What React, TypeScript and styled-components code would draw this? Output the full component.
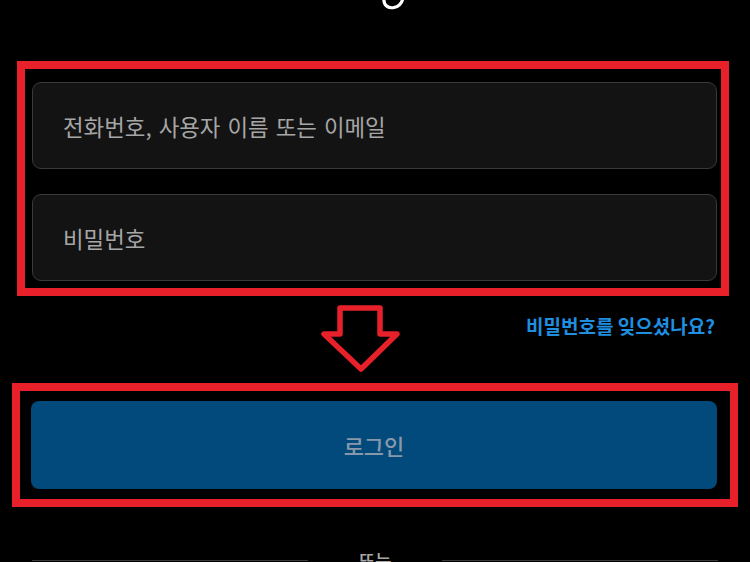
import React from "react";
import styled, { createGlobalStyle } from "styled-components";

const Global = createGlobalStyle`
  html, body {
    margin: 0;
    padding: 0;
    background: #000;
  }
  body {
    font-family: "Noto Sans CJK KR", "Noto Sans", sans-serif;
    color: #fff;
  }
  * { box-sizing: border-box; }
`;

const Page = styled.div`
  width: 750px;
  height: 562px;
  overflow: hidden;
  background: #000;
  display: flex;
  flex-direction: column;
  & > * {
    flex-shrink: 0;
  }
`;

const LogoStrip = styled.div`
  height: 61px;
  display: flex;
  justify-content: center;
  align-items: flex-start;
`;

const Highlight = styled.div<{ $ml: number; $w: number; $pad: string }>`
  margin-left: ${(p) => p.$ml}px;
  width: ${(p) => p.$w}px;
  border: 8px solid #e8202a;
  padding: ${(p) => p.$pad};
  display: flex;
  flex-direction: column;
  gap: 25px;
`;

const Field = styled.div`
  height: 87px;
  width: 685px;
  background: #131313;
  border: 1px solid #3a3a3a;
  border-radius: 9px;
  display: flex;
  align-items: center;
  padding-left: 30px;
  font-size: 22.4px;
  word-spacing: 2px;
  color: #a6a6a6;
`;

const MidRow = styled.div`
  height: 87px;
  display: flex;
  align-items: flex-start;
`;

const ArrowMark = styled.svg`
  margin-left: 320px;
  margin-top: 9px;
  flex: none;
`;

const ForgotLink = styled.a`
  margin-left: auto;
  margin-right: 35px;
  margin-top: 19px;
  font-size: 19px;
  line-height: 22px;
  font-weight: 700;
  color: #1f8fe0;
  text-decoration: none;
`;

const LoginButton = styled.button`
  width: 686px;
  height: 88px;
  border: none;
  border-radius: 8px;
  background: #024a7b;
  color: #8798ab;
  font-family: "Noto Sans CJK KR", "Noto Sans", sans-serif;
  font-size: 22px;
  font-weight: 500;
  cursor: pointer;
`;

const Divider = styled.div`
  margin-top: 42px;
  margin-left: 32px;
  width: 686px;
  display: flex;
  align-items: center;
  gap: 50px;
`;

const Line = styled.div`
  flex: 1;
  height: 1px;
  background: #3a3a3a;
`;

const OrText = styled.span`
  font-size: 18px;
  line-height: 22px;
  color: #a8a8a8;
  font-weight: 500;
`;

export default function App() {
  return (
    <>
      <Global />
      <Page>
        <LogoStrip>
          <svg width="30" height="12" viewBox="0 0 30 12" style={{ marginLeft: 38 }}>
            <path
              d="M5 -2 C4 6, 10 8.5, 15 7.5 C20 6.5, 23 3, 24 -2"
              fill="none"
              stroke="#fff"
              strokeWidth="3.2"
              strokeLinecap="round"
            />
          </svg>
        </LogoStrip>
        <Highlight $ml={17} $w={712} $pad="13px 5px 7px 7px">
          <Field>전화번호, 사용자 이름 또는 이메일</Field>
          <Field>비밀번호</Field>
        </Highlight>
        <MidRow>
          <ArrowMark width="82" height="68" viewBox="0 0 82 68">
            <path
              d="M20 3 H60 V29 H77 L41 64 L4 29 H20 Z"
              fill="none"
              stroke="#e8202a"
              strokeWidth="5.5"
              strokeLinejoin="round"
            />
          </ArrowMark>
          <ForgotLink href="#">비밀번호를 잊으셨나요?</ForgotLink>
        </MidRow>
        <Highlight $ml={12} $w={726} $pad="10px 11px">
          <LoginButton>로그인</LoginButton>
        </Highlight>
        <Divider>
          <Line />
          <OrText>또는</OrText>
          <Line />
        </Divider>
      </Page>
    </>
  );
}
